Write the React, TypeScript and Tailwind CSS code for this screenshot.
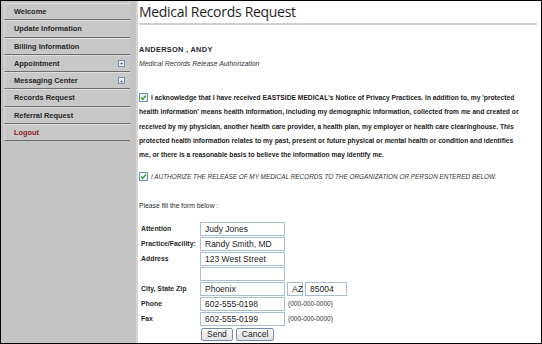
import React from "react";

const menu = [
  { label: "Welcome" },
  { label: "Update Information" },
  { label: "Billing Information" },
  { label: "Appointment", plus: true },
  { label: "Messaging Center", plus: true },
  { label: "Records Request" },
  { label: "Referral Request" },
  { label: "Logout", red: true },
];

function Check() {
  return (
    <span className="inline-flex items-center justify-center w-[9px] h-[9px] border border-[#6d8fb3] bg-[#f4f8fc] align-[-1px] mr-[3px]">
      <svg width="7" height="7" viewBox="0 0 7 7">
        <path d="M1 3.5 L2.8 5.3 L6 1.5" fill="none" stroke="#2e9a2e" strokeWidth="1.4" />
      </svg>
    </span>
  );
}

function Field({ value, w = 85 }: { value: string; w?: number }) {
  return (
    <div
      className="h-[14px] border border-[#a9bdd4] bg-white pl-[4px] text-[8.5px] leading-[12px] text-[#222] font-['Liberation_Sans',sans-serif]"
      style={{ width: w }}
    >
      {value}
    </div>
  );
}

const hint = "text-[6.5px] text-[#333] font-['Liberation_Sans',sans-serif]";
const btn =
  "h-[13px] px-[5px] border border-[#7a8ea8] rounded-[2px] bg-gradient-to-b from-[#fbfbfb] to-[#e2e2e2] text-[8.5px] leading-[11px] text-[#222] font-['Liberation_Sans',sans-serif]";

export default function App() {
  const rows: [string, React.ReactNode][] = [
    ["Attention", <Field value="Judy Jones" />],
    ["Practice/Facility:", <Field value="Randy Smith, MD" />],
    ["Address", <Field value="123 West Street" />],
    ["", <Field value="" />],
    [
      "City, State Zip",
      <div className="flex gap-[2px]">
        <Field value="Phoenix" />
        <Field value="AZ" w={16} />
        <Field value="85004" w={42} />
      </div>,
    ],
    [
      "Phone",
      <div className="flex gap-[3px] items-center">
        <Field value="602-555-0198" />
        <span className={hint}>(000-000-0000)</span>
      </div>,
    ],
    [
      "Fax",
      <div className="flex gap-[3px] items-center">
        <Field value="602-555-0199" />
        <span className={hint}>(000-000-0000)</span>
      </div>,
    ],
  ];

  return (
    <div className="w-[542px] h-[344px] border border-black flex overflow-hidden bg-white font-['Liberation_Sans',sans-serif]">
      <div className="w-[137px] shrink-0 bg-[#c4c4c4] border-r-[2px] border-[#d6d6d6] pt-[2px] pl-[3px]">
        <div className="w-[126px]">
          {menu.map((m) => (
            <div
              key={m.label}
              className="h-[17.25px] flex items-center justify-between pl-[9px] pr-[5px] bg-[#c8c8c8] border-t border-t-[#dedede] border-b border-b-[#6e6e6e] border-l border-l-[#d8d8d8]"
            >
              <span
                className={
                  "text-[7.4px] font-bold " +
                  (m.red ? "text-[#8a1c2c]" : "text-[#262626]")
                }
              >
                {m.label}
              </span>
              {m.plus && (
                <span className="w-[7px] h-[7px] border border-[#7b8ea8] bg-[#e8eef6] flex items-center justify-center text-[6px] leading-none text-[#334]">
                  +
                </span>
              )}
            </div>
          ))}
        </div>
      </div>
      <div className="flex-1 pl-[1px] pr-[4px] text-[#222]">
        <div className="text-[14px] leading-[20px] pt-[1px] tracking-[-0.3px] text-[#1e1e1e] font-['Open_Sans',sans-serif]">
          Medical Records Request
        </div>
        <div className="h-[2px] bg-[#d0d0cc] mt-[1px]" />
        <div className="mt-[20px] text-[7.4px] leading-[10px] font-bold tracking-[0.3px] text-[#2a2a2a]">ANDERSON , ANDY</div>
        <div className="mt-[4px] text-[6.9px] leading-[10px] italic text-[#333]">Medical Records Release Authorization</div>
        <div className="mt-[22px] text-[6.7px] leading-[14.3px] font-bold text-[#222] whitespace-nowrap">
          <Check />I acknowledge that I have received EASTSIDE MEDICAL's Notice of Privacy Practices. In addition to, my 'protected
          <br />
          health information' means health information, including my demographic information, collected from me and created or
          <br />
          received by my physician, another health care provider, a health plan, my employer or health care clearinghouse. This
          <br />
          protected health information relates to my past, present or future physical or mental health or condition and identifies
          <br />
          me, or there is a reasonable basis to believe the information may identify me.
        </div>
        <div className="mt-[10px] text-[6.4px] leading-[10px] italic text-[#333] whitespace-nowrap">
          <Check />I AUTHORIZE THE RELEASE OF MY MEDICAL RECORDS TO THE ORGANIZATION OR PERSON ENTERED BELOW.
        </div>
        <div className="mt-[19px] text-[6.8px] leading-[10px] text-[#2a2a2a]">Please fill the form below :</div>
        <div className="mt-[10px] pl-[2px] flex flex-col">
          {rows.map(([l, f], i) => (
            <div key={i} className="flex items-center h-[15px]">
              <div className="w-[59px] text-[6.9px] font-bold text-[#2a2a2a] whitespace-nowrap">{l}</div>
              {f}
            </div>
          ))}
          <div className="flex gap-[3px] pl-[60px] mt-[2px]">
            <button className={btn}>Send</button>
            <button className={btn}>Cancel</button>
          </div>
        </div>
      </div>
    </div>
  );
}
